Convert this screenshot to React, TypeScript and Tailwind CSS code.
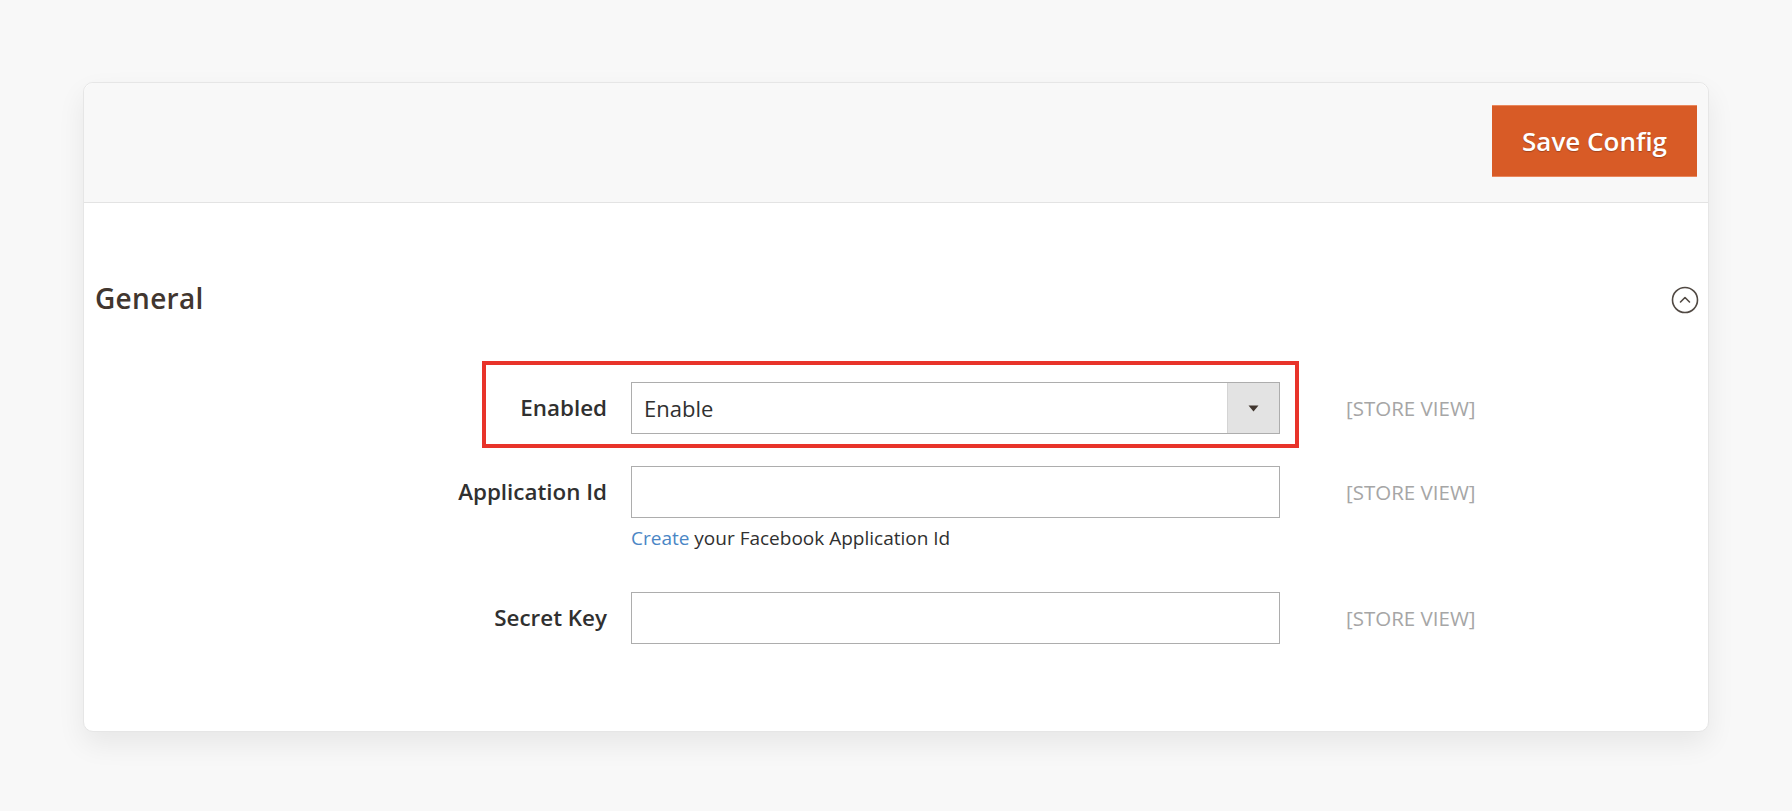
import React, { useState } from 'react';

const fieldRows = [
  { label: 'Application Id', note: true },
  { label: 'Secret Key', note: false },
];

const ScopeLabel: React.FC = () => (
  <span className="ml-[66px] text-[20.5px] leading-[26px] text-[#a6a6a6]">[STORE VIEW]</span>
);

const App: React.FC = () => {
  const [enabled, setEnabled] = useState('Enable');
  const [appId, setAppId] = useState('');
  const [secret, setSecret] = useState('');

  return (
    <div
      className="min-h-[811px] bg-[#f8f8f8] pt-[82px] pl-[83px] pb-[80px]"
      style={{ fontFamily: '"Open Sans", "Liberation Sans", sans-serif' }}
    >
      <div className="w-[1626px] rounded-[10px] border border-[#e6e6e6] bg-white shadow-[0_12px_28px_rgba(0,0,0,0.07)]">
        {/* Page actions */}
        <div className="flex h-[120px] justify-end rounded-t-[10px] border-b border-[#e3e3e3] bg-[#f8f8f8] pt-[22px] pr-[11px]">
          <button className="h-[72px] w-[205px] border-y border-[#e9875c] bg-[#d85b26] text-[26px] font-semibold text-white [text-shadow:0_1px_1px_rgba(0,0,0,0.25)]">
            Save Config
          </button>
        </div>

        {/* General section */}
        <div className="px-[12px] pt-[79px] pb-[87px]">
          <div className="flex items-center justify-between">
            <h3 className="ml-[-1px] text-[28px] leading-[30px] font-semibold tracking-[0.3px] text-[#41362f]">General</h3>
            <svg width="28" height="28" viewBox="0 0 28 28" className="mr-[-3px] mt-[4px]">
              <circle cx="14" cy="14" r="12.5" fill="none" stroke="#514943" strokeWidth="1.6" />
              <path d="M9.5 16 L14 11.5 L18.5 16" fill="none" stroke="#514943" strokeWidth="1.6" strokeLinecap="round" strokeLinejoin="round" />
            </svg>
          </div>

          <div className="mt-[68px] pl-[211px]">
            {/* Enabled */}
            <div className="relative flex items-center">
              <div className="pointer-events-none absolute left-[175px] top-[-21px] h-[87px] w-[817px] border-4 border-[#e8332a]" />
              <label className="w-[300px] text-right text-[22.4px] font-semibold text-[#303030]">Enabled</label>
              <div className="ml-[24px] flex h-[52px] w-[649px] border border-[#adadad] bg-white">
                <select
                  value={enabled}
                  onChange={(e) => setEnabled(e.target.value)}
                  className="flex-1 appearance-none bg-transparent pl-[12px] text-[22px] text-[#303030] outline-none"
                >
                  <option>Enable</option>
                  <option>Disable</option>
                </select>
                <div className="flex w-[52px] items-center justify-center border-l border-[#d4d4d4] bg-[#e3e3e3]">
                  <svg width="11" height="7" viewBox="0 0 11 7">
                    <path d="M0.5 0.5 H10.5 L5.5 6.5 Z" fill="#41362f" />
                  </svg>
                </div>
              </div>
              <ScopeLabel />
            </div>

            {/* Text fields */}
            {fieldRows.map((row, i) => (
              <div key={row.label} className={i === 0 ? 'mt-[32px]' : 'mt-[42px]'}>
                <div className="flex items-center">
                  <label className="w-[300px] text-right text-[22.4px] font-semibold text-[#303030]">{row.label}</label>
                  <input
                    value={i === 0 ? appId : secret}
                    onChange={(e) => (i === 0 ? setAppId(e.target.value) : setSecret(e.target.value))}
                    className="ml-[24px] h-[52px] w-[649px] border border-[#adadad] bg-white px-[12px] text-[22px] text-[#303030] outline-none"
                  />
                  <ScopeLabel />
                </div>
                {row.note && (
                  <p className="ml-[324px] mt-[8px] text-[19px] leading-[24px] text-[#303030]">
                    <a href="#" className="text-[#4a86c5]">Create</a> your Facebook Application Id
                  </p>
                )}
              </div>
            ))}
          </div>
        </div>
      </div>
    </div>
  );
};

export default App;
